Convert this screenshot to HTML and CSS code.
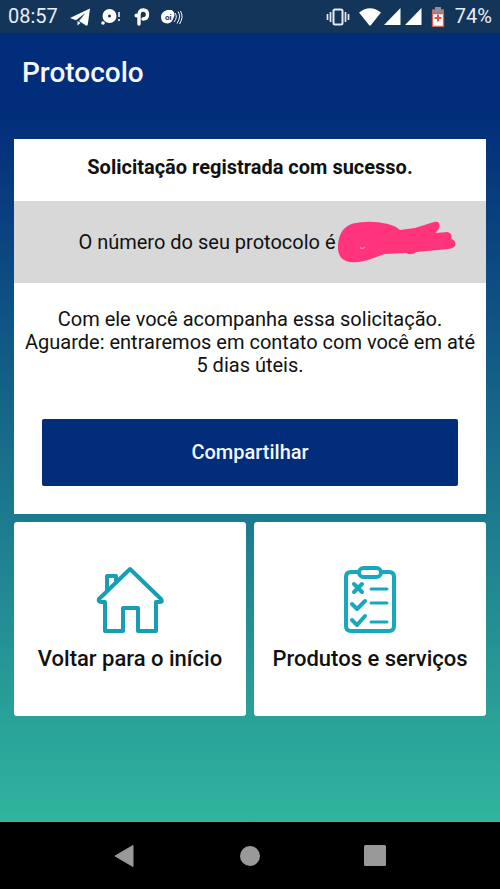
FILE: index.html
```html
<!DOCTYPE html>
<html lang="pt-BR">
<head>
<meta charset="utf-8">
<meta name="viewport" content="width=device-width, initial-scale=1">
<title>Protocolo</title>
<link rel="stylesheet" href="styles.css">
</head>
<body>
<div class="status">
  <div class="status-group">
    <span class="clock">08:57</span>
    <svg class="telegram" width="20" height="18" viewBox="0 0 20 18" aria-hidden="true"><path fill="#fff" d="M20 .5 0 10l6 2.200L15.500 5 9 13l7 4.600q1.500.6 1.800-1ZM7.500 13v4.500l3-2.500Z"/></svg>
    <svg class="disc" width="20" height="18" viewBox="0 0 20 18" aria-hidden="true"><circle cx="8.500" cy="8" r="7" fill="#fff"/><circle cx="8.500" cy="8" r="1.500" fill="#13355a"/><circle cx="2" cy="15" r="1.800" fill="#fff"/><path d="M18 4v5m0 2v2" stroke="#fff" stroke-width="1.500"/></svg>
    <svg class="pay" width="16" height="18" viewBox="0 0 16 18" aria-hidden="true"><path d="M5 16V7q0-5 4-5 4.500 0 4.500 4.500T9 11" fill="none" stroke="#fff" stroke-width="3.400" stroke-linecap="round"/><circle cx="2.500" cy="7.500" r="2" fill="#fff"/></svg>
    <svg class="oi" width="22" height="16" viewBox="0 0 22 16" role="img" aria-label="oi"><path fill="#fff" d="M6 1h5q4 3 1.500 8-1.500 5-6 5.500Q0 14 0 8q0-5 6-7Z"/><text x="4" y="11" class="oi-text">oi</text><path d="M14 4q3 4-1 9M17 2.500q3.500 5-1 12M19.500 2q3.500 6-1 13" fill="none" stroke="#fff" stroke-width="1"/></svg>
  </div>
  <div class="status-group">
    <svg class="vibrate" width="24" height="18" viewBox="0 0 24 18" aria-hidden="true"><rect x="7.500" y="1.500" width="9" height="15" rx="1.500" fill="none" stroke="#e4eaf0" stroke-width="2"/><path d="M4.500 4v10M1.500 6v6M19.500 4v10M22.500 6v6" stroke="#e4eaf0" stroke-width="1.700"/></svg>
    <svg class="wifi" width="22" height="18" viewBox="0 0 22 18" aria-hidden="true"><path fill="#fff" d="M0 4.500q11-8.500 22 0L12 17q-1 1-2 0Z"/></svg>
    <svg class="signal" width="17" height="17" viewBox="0 0 17 17" aria-hidden="true"><path fill="#fff" d="M16.500 0v17H0Z"/></svg>
    <svg class="signal" width="17" height="17" viewBox="0 0 17 17" aria-hidden="true"><path fill="#fff" d="M16.500 0v17H0Z"/></svg>
    <svg class="battery" width="14" height="20" viewBox="0 0 14 20" aria-hidden="true"><path fill="#8d9099" d="M4 0h6v2.500h3V7H1V2.500h3Z"/><path fill="#fff" stroke="#d96159" stroke-width="1.300" d="M1.500 6.500h11v12.800h-11Z"/><path d="M1.500 7V3h3M12.500 7V3h-3" fill="none" stroke="#d96159"/><path d="M7 7.500v7M3.500 11h7" stroke="#e0523f" stroke-width="2"/></svg>
    <span class="percent">74%</span>
  </div>
</div>
<main class="screen">
  <h1 class="title">Protocolo</h1>
  <section class="card">
    <h2 class="card-title">Solicitação registrada com sucesso.</h2>
    <div class="protocol">
      <span>O número do seu protocolo é</span>
      <svg width="118" height="43" viewBox="0 0 118 43" role="img" aria-label="Número oculto"><path fill="#ff347c" d="M0 24Q1 7 15 2.500 32-1 50 3q8 2 12 6l15-2 19-6q6-1 5.500 4 0 3-4 7l12-1q5 1 4 7 4 1 4 5 0 4-7 5l-32 3q-6 4-10 1l-22 1-11 4q-11 5-24 4Q-1 39 0 24Z"/><path d="M22 27q3 1 5-.5" stroke="#f5a6c4" fill="none"/></svg>
    </div>
    <div class="card-body">
      <p class="message">Com ele você acompanha essa solicitação. Aguarde: entraremos em contato com você em até 5 dias úteis.</p>
      <button type="button" class="share">Compartilhar</button>
    </div>
  </section>
  <nav class="tiles">
    <a class="tile" href="#inicio">
      <svg width="68" height="68" viewBox="0 0 68 68" aria-hidden="true"><path d="M34 3 3 33q-1 3 2 3h4v29h18V42h15v23h18V36h4q3 0 1-3ZM11 25V10h9v6" fill="none" stroke="#179eb2" stroke-width="4" stroke-linejoin="round" stroke-linecap="round"/></svg>
      <span>Voltar para o início</span>
    </a>
    <a class="tile" href="#produtos">
      <svg width="68" height="68" viewBox="0 0 68 68" aria-hidden="true"><g fill="none" stroke="#17a8bb" stroke-width="4" stroke-linecap="round" stroke-linejoin="round"><path d="M22 6h-7q-5 0-5 5v49q0 5 5 5h38q5 0 5-5V11q0-5-5-5h-7"/><rect x="23" y="2" width="22" height="9" rx="4.500"/><path d="m18 18 8 8m0-8-8 8M16 38l5 5 8-8M16 54l5 5 8-9"/><path stroke-width="3" d="M35 23h16M35 37h16M35 56h16"/></g></svg>
      <span>Produtos e serviços</span>
    </a>
  </nav>
</main>
<footer class="system-nav">
  <button type="button" aria-label="Voltar"><svg width="22" height="24" viewBox="0 0 22 24" aria-hidden="true"><path fill="#999" stroke="#999" stroke-linejoin="round" d="M1 12 19 1.500v21Z"/></svg></button>
  <button type="button" aria-label="Início"><svg width="22" height="24" viewBox="0 0 22 24" aria-hidden="true"><circle cx="11" cy="12" r="10" fill="#999"/></svg></button>
  <button type="button" aria-label="Recentes"><svg width="22" height="24" viewBox="0 0 22 24" aria-hidden="true"><rect y="1" width="22" height="21" rx="1.500" fill="#999"/></svg></button>
</footer>
</body>
</html>
```
FILE: styles.css
```css
* {
  box-sizing: border-box;
}

body {
  margin: 0;
  min-height: 100vh;
  display: flex;
  flex-direction: column;
  background: #000;
  color: #111;
  font-family: Roboto, "Liberation Sans", sans-serif;
  font-size: 20px;
  line-height: 23px;
}

h1,
h2,
p {
  margin: 0;
}

svg {
  display: block;
  flex: none;
}

.status {
  display: flex;
  justify-content: space-between;
  height: 33px;
  padding: 0 8px;
  background: #13355a;
  color: #e9eef4;
}

.status-group {
  display: flex;
  align-items: center;
}

.telegram {
  margin-left: 12px;
}

.disc {
  margin-left: 11px;
}

.pay {
  margin-left: 13px;
}

.oi {
  margin-left: 11px;
}

.oi-text {
  font-size: 8px;
  font-weight: 700;
  fill: #13355a;
}

.wifi {
  margin-left: 9px;
}

.signal {
  margin-left: 3px;
}

.signal + .signal {
  margin-left: 4px;
}

.battery {
  margin-left: 9px;
}

.percent {
  margin-left: 10px;
}

.screen {
  flex: 1;
  padding: 24px 14px;
  background: linear-gradient(#022d7a 82px, #30b59e);
}

.title {
  padding-left: 8px;
  margin-bottom: 50px;
  color: #f4f8ff;
  font-size: 28px;
  font-weight: 500;
  line-height: 32px;
}

.card {
  background: #fff;
  text-align: center;
}

.card-title {
  padding: 17px 8px 22px;
  font-size: 20px;
  font-weight: 700;
}

.protocol {
  display: flex;
  align-items: center;
  justify-content: center;
  gap: 2px;
  min-height: 82px;
  padding: 0 8px 0 42px;
  background: #d8d8d8;
}

.card-body {
  padding: 25px 8px 28px;
}

.message {
  margin-bottom: 42px;
}

.share {
  display: block;
  width: calc(100% - 40px);
  margin: 0 auto;
  padding: 22px;
  border: 0;
  border-radius: 2px;
  background: #022d7a;
  color: #f4f8ff;
  font: inherit;
  font-weight: 500;
}

.tiles {
  display: grid;
  grid-template-columns: 1fr 1fr;
  gap: 8px;
  margin-top: 8px;
}

.tile {
  display: flex;
  flex-direction: column;
  align-items: center;
  gap: 12px;
  padding: 44px 8px;
  border-radius: 3px;
  background: #fff;
  color: #111;
  font-size: 22px;
  font-weight: 500;
  line-height: 26px;
  text-decoration: none;
}

.system-nav {
  display: flex;
  justify-content: center;
  gap: 103px;
  padding: 22px 0 21px;
  background: #000;
}

.system-nav button {
  padding: 0;
  border: 0;
  background: none;
}
```
